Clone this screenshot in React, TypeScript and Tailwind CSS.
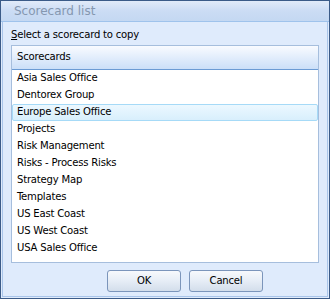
import React from 'react';

const items = [
  'Asia Sales Office',
  'Dentorex Group',
  'Europe Sales Office',
  'Projects',
  'Risk Management',
  'Risks - Process Risks',
  'Strategy Map',
  'Templates',
  'US East Coast',
  'US West Coast',
  'USA Sales Office',
];

const selected = 'Europe Sales Office';

function DialogButton({ children }: { children: React.ReactNode }) {
  return (
    <button className="h-[22px] w-[74px] rounded-[3px] border border-[#7b95bb] bg-gradient-to-b from-[#f7f9fc] via-[#e6edf6] to-[#d3deeb] text-black">
      {children}
    </button>
  );
}

export default function App() {
  return (
    <div
      className="flex h-[299px] w-[330px] flex-col border border-[#3b5b88] bg-[#dfebfc] text-[11.2px] tracking-[-0.2px] text-black"
      style={{ fontFamily: '"DejaVu Sans Condensed", "DejaVu Sans", sans-serif' }}
    >
      {/* title bar */}
      <div
        className="flex h-[21px] items-center border-b border-[#9fc3ec] bg-gradient-to-b from-[#e1ebf9] via-[#cbdcf4] to-[#c4d8f2] pl-[13px] text-[12px] tracking-normal text-[#8597b0]"
        style={{ fontFamily: '"DejaVu Sans", sans-serif' }}
      >
        Scorecard list
      </div>

      <div className="mx-[1px] mb-[1px] flex flex-1 flex-col border-x border-b border-[#a9c5ea] px-[8px] pt-[3px]">
        <div className="h-[19px] leading-[19px]">
          <span className="underline">S</span>elect a scorecard to copy
        </div>

        <div className="mt-[1px] flex h-[218px] flex-col border border-[#a6bedd] bg-white">
          <div className="flex h-[24px] shrink-0 items-center border-b border-[#6b9bd4] bg-gradient-to-b from-[#f9fbff] to-[#cbdff8] pl-[5px]">
            Scorecards
          </div>
          <div className="flex flex-col">
            {items.map((item) =>
              item === selected ? (
                <div
                  key={item}
                  className="flex h-[17px] items-center rounded-[2px] border border-[#a6daf7] bg-gradient-to-b from-[#ecf8ff] to-[#d8effc] pl-[4px]"
                >
                  {item}
                </div>
              ) : (
                <div key={item} className="flex h-[17px] items-center pl-[5px]">
                  {item}
                </div>
              )
            )}
          </div>
        </div>

        <div className="mt-[7px] flex gap-[8px] pl-[96px]">
          <DialogButton>OK</DialogButton>
          <DialogButton>Cancel</DialogButton>
        </div>
      </div>
    </div>
  );
}
